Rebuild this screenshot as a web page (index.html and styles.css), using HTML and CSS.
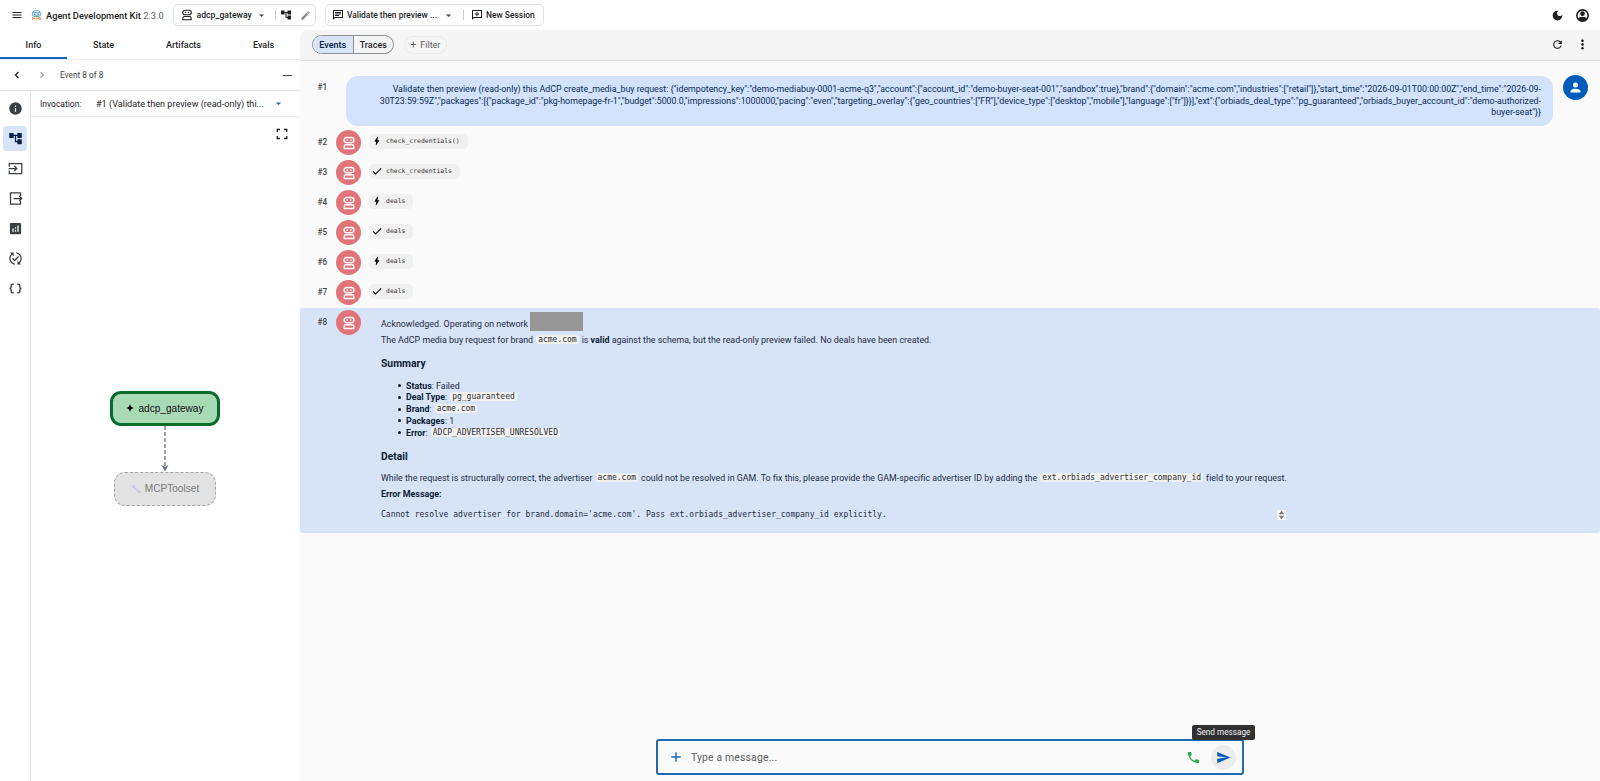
FILE: index.html
```html
<!DOCTYPE html>
<html lang="en">
<head>
  <meta charset="UTF-8">
  <title>Agent Development Kit</title>
  <meta name="viewport" content="width=device-width, initial-scale=1.0">
  <link rel="stylesheet" href="styles.css">
</head>
<body>

  <!-- Shared icons -->
  <svg class="sprite" width="0" height="0">
    <symbol id="i-bot" viewBox="0 0 24 24"><path fill="none" stroke="currentColor" stroke-width="2.300" d="M8 2.500h8a4.500 4.500 0 0 1 0 9H8a4.500 4.500 0 0 1 0-9zM3.800 21.500v-3.500a3 3 0 0 1 3-3h10.400a3 3 0 0 1 3 3v3.500z"/><circle cx="9" cy="7" r="1.500" fill="currentColor"/><circle cx="15" cy="7" r="1.500" fill="currentColor"/></symbol>
    <symbol id="i-tree" viewBox="0 0 24 24"><path fill="currentColor" d="M22 11V3h-7v3H9V3H2v8h7V8h2v10h4v3h7v-8h-7v3h-2V8h2v3z"/></symbol>
    <symbol id="i-bolt" viewBox="0 0 24 24"><path fill="currentColor" d="M10 22H9l1-8H6.500c-.9 0-.5-.8-.3-1.200C8 9.500 10.400 6 13 2h1.500l-1 8H17c.7 0 .8.4.5 1C15 15.500 12.500 18.500 10 22z"/></symbol>
    <symbol id="i-check" viewBox="0 0 24 24"><path fill="none" stroke="currentColor" stroke-width="2.600" d="m2.500 13 6 6L22 5.500"/></symbol>
    <symbol id="i-drop" viewBox="0 0 24 24"><path fill="currentColor" d="m5 9 7 7 7-7z"/></symbol>
  </svg>

  <header class="topbar">
    <svg class="icon menu" viewBox="0 0 24 24"><path fill="currentColor" d="M3 18.200h18v-2.200H3zm0-5.100h18v-2.200H3zm0-7.300V8h18V5.800z"/></svg>
    <svg class="logo" viewBox="0 0 20 20">
      <path d="M3.500 7V4.500l3-2.500h7l3 2.500V7" fill="none" stroke="#6fb1e8" stroke-width="1.800"/>
      <rect x="2.500" y="5" width="15" height="7" rx="2.500" fill="#dcedfb" stroke="#4d96d8" stroke-width="1.600"/>
      <circle cx="7" cy="8.500" r="1.300" fill="#2d5f9a"/><circle cx="13" cy="8.500" r="1.300" fill="#2d5f9a"/>
      <path d="M6 12.500h8" stroke="#51a96a" stroke-width="1.800"/>
      <path d="M3.500 14v5M5 14.500l2 2.500" stroke="#ef6a5b" stroke-width="2"/><path d="M10 14v4.500" stroke="#f5b73c" stroke-width="2.500"/><path d="M16.500 14v5M15 14.500l-2 2.500" stroke="#ef6a5b" stroke-width="2"/>
    </svg>
    <div class="brand">Agent Development Kit <span>2.3.0</span></div>

    <div class="pill app-pill">
      <svg class="icon"><use href="#i-bot"/></svg>
      <span class="app-name">adcp_gateway</span>
      <svg class="icon drop"><use href="#i-drop"/></svg>
      <i class="sep"></i>
      <svg class="icon tree"><use href="#i-tree"/></svg>
      <svg class="icon pencil" viewBox="0 0 24 24"><path fill="currentColor" d="M3 17.250V21h3.750L17.800 9.950 14.050 6.200zM20.700 7.050a1 1 0 0 0 0-1.400l-2.350-2.350a1 1 0 0 0-1.400 0l-1.850 1.850 3.750 3.750z"/></svg>
    </div>

    <div class="pill session-pill">
      <svg class="icon" viewBox="0 0 24 24"><path fill="currentColor" d="M2 2h20v16H6l-4 4zm2 2v13l1.200-1H20V4zm2 2h12v2H6zm0 3h12v2H6zm0 3h8v2H6z"/></svg>
      <span class="session-name">Validate then preview ...</span>
      <svg class="icon drop"><use href="#i-drop"/></svg>
      <i class="sep"></i>
      <svg class="icon add" viewBox="0 0 24 24"><path fill="currentColor" d="M2 2h20v16H6l-4 4zm2 2v13l1.200-1H20V4zm7 1.500h2V9h3.500v2H13v3.500h-2V11H7.500V9H11z"/></svg>
      <span class="new-session">New Session</span>
    </div>

    <div class="top-actions">
      <svg class="icon moon" viewBox="0 0 24 24"><path fill="currentColor" d="M12 3a9 9 0 1 0 9 9c0-.5 0-.9-.1-1.400A5.400 5.400 0 1 1 13.400 3.100 9 9 0 0 0 12 3z"/></svg>
      <svg class="icon account" viewBox="0 0 24 24"><circle cx="12" cy="12" r="9" fill="none" stroke="currentColor" stroke-width="2.600"/><circle cx="12" cy="9" r="3.800" fill="currentColor"/><path fill="currentColor" d="M4.500 18c1-3 4-4.200 7.500-4.200s6.500 1.200 7.500 4.200l-3.500 3H8z"/></svg>
    </div>
  </header>

  <div class="layout">
    <aside class="sidebar">
      <nav class="tabs">
        <div class="tab active">Info</div>
        <div class="tab">State</div>
        <div class="tab">Artifacts</div>
        <div class="tab">Evals</div>
      </nav>

      <div class="event-nav">
        <svg class="icon prev" viewBox="0 0 24 24"><path fill="none" stroke="currentColor" stroke-width="2.600" d="m15 6-6 6 6 6"/></svg>
        <svg class="icon next" viewBox="0 0 24 24"><path fill="none" stroke="currentColor" stroke-width="2" d="m9 6 6 6-6 6"/></svg>
        <span>Event 8 of 8</span>
        <i class="collapse"></i>
      </div>

      <div class="side-body">
        <div class="rail">
          <div class="rail-item"><svg viewBox="0 0 24 24"><path fill="currentColor" d="M12 2a10 10 0 1 0 0 20 10 10 0 0 0 0-20zm1 15h-2v-6h2zm0-8h-2V7h2z"/></svg></div>
          <div class="rail-item selected"><svg><use href="#i-tree"/></svg></div>
          <div class="rail-item"><svg viewBox="0 0 24 24"><path fill="none" stroke="currentColor" stroke-width="2" d="M2 9V4h20v16H2v-5M1 12h13m-4-4 4 4-4 4"/></svg></div>
          <div class="rail-item"><svg viewBox="0 0 24 24"><path fill="none" stroke="currentColor" stroke-width="2" d="M20 8V3H4v18h16v-5M9 12h13m-4-4 4 4-4 4"/></svg></div>
          <div class="rail-item"><svg viewBox="0 0 24 24"><path fill="currentColor" fill-rule="evenodd" d="M5 3h14a2 2 0 0 1 2 2v14a2 2 0 0 1-2 2H5a2 2 0 0 1-2-2V5c0-1.100.9-2 2-2zm2 9v5h2v-5zm4 2v3h2v-3zm0-4v2h2v-2zm4-3v10h2V7z"/></svg></div>
          <div class="rail-item"><svg viewBox="0 0 24 24"><path fill="currentColor" d="m17.660 9.530-7.070 7.070-4.240-4.240 1.410-1.410 2.830 2.830 5.660-5.660zM4 12c0-2.330 1.020-4.420 2.620-5.880L9 8.500v-6H3l2.200 2.200C3.240 6.520 2 9.110 2 12c0 5.190 3.950 9.450 9 9.950v-2.020c-3.940-.49-7-3.860-7-7.930zm18 0c0-5.190-3.950-9.450-9-9.950v2.020c3.940.49 7 3.860 7 7.930 0 2.330-1.020 4.420-2.620 5.880L15 15.500v6h6l-2.200-2.200c1.960-1.820 3.200-4.410 3.200-7.300z"/></svg></div>
          <div class="rail-item"><svg viewBox="0 0 24 24"><path fill="none" stroke="currentColor" stroke-width="2.200" d="M9.500 5H7.500A2.500 2.500 0 0 0 5 7.500V9.500A2.500 2.500 0 0 1 2.500 12 2.500 2.500 0 0 1 5 14.500v2A2.500 2.500 0 0 0 7.500 19h2M14.500 5h2A2.500 2.500 0 0 1 19 7.500v2a2.500 2.500 0 0 0 2.500 2.500 2.500 2.500 0 0 0-2.500 2.500v2a2.500 2.500 0 0 1-2.500 2.500h-2"/></svg></div>
        </div>

        <div class="panel">
          <div class="invocation">
            <label>Invocation:</label>
            <span>#1 (Validate then preview (read-only) thi...</span>
            <svg class="icon drop"><use href="#i-drop"/></svg>
          </div>
          <div class="graph">
            <svg class="expand" viewBox="0 0 24 24"><path fill="none" stroke="currentColor" stroke-width="2.600" d="M2.500 8V3H8M16 3h5.500v5M21.500 16v5H16M8 21H2.500v-5"/></svg>
            <div class="node agent">
              <svg viewBox="0 0 10 10"><path d="M5 0c.6 3 2 4.400 5 5-3 .6-4.400 2-5 5-.6-3-2-4.400-5-5 3-.6 4.400-2 5-5z"/></svg>
              adcp_gateway
            </div>
            <svg class="edge" viewBox="0 0 10 46"><path d="M5 0v42" stroke="#6b7280" stroke-width="1.300" stroke-dasharray="4 2" fill="none"/><path d="M1.500 39 5 45.500 8.500 39 5 41z" fill="#5f6b85"/></svg>
            <div class="node toolset">
              <svg viewBox="0 0 10 10"><path d="M1 1.500 3 3l5 5 1.500.5M1 3l2 .2M3 1v2M7 8.500 8.500 7" fill="none" stroke="#c3c7e4" stroke-width="1.400"/></svg>
              MCPToolset
            </div>
          </div>
        </div>
      </div>
    </aside>

    <main class="main">
      <div class="toolbar">
        <div class="toggle"><span class="on">Events</span><span>Traces</span></div>
        <div class="filter"><b>+</b> Filter</div>
        <div class="toolbar-actions">
          <svg class="icon" viewBox="0 0 24 24"><path fill="currentColor" d="M17.650 6.350A8 8 0 1 0 19.730 14h-2.080A6 6 0 1 1 12 6c1.660 0 3.140.69 4.220 1.780L13 11h7V4z"/></svg>
          <svg class="icon" viewBox="0 0 24 24"><circle cx="12" cy="5" r="2.200"/><circle cx="12" cy="12" r="2.200"/><circle cx="12" cy="19" r="2.200"/></svg>
        </div>
      </div>

      <div class="events">
        <div class="event user">
          <span class="num">#1</span>
          <div class="bubble">Validate then preview (read-only) this AdCP create_media_buy request: {"idempotency_key":"demo-mediabuy-0001-acme-q3","account":{"account_id":"demo-buyer-seat-001","sandbox":true},"brand":{"domain":"acme.com","industries":["retail"]},"start_time":"2026-09-01T00:00:00Z","end_time":"2026-09-<br>30T23:59:59Z","packages":[{"package_id":"pkg-homepage-fr-1","budget":5000.0,"impressions":1000000,"pacing":"even","targeting_overlay":{"geo_countries":["FR"],"device_type":["desktop","mobile"],"language":["fr"]}}],"ext":{"orbiads_deal_type":"pg_guaranteed","orbiads_buyer_account_id":"demo-authorized-<br>buyer-seat"}}</div>
          <div class="avatar me"><svg viewBox="0 0 24 24"><path fill="currentColor" d="M12 12a4 4 0 1 0 0-8 4 4 0 0 0 0 8zm0 2c-2.700 0-8 1.300-8 4v2h16v-2c0-2.700-5.300-4-8-4z"/></svg></div>
        </div>

        <div class="event">
          <span class="num">#2</span><div class="avatar"><svg><use href="#i-bot"/></svg></div>
          <div class="chip"><svg><use href="#i-bolt"/></svg>check_credentials()</div>
        </div>
        <div class="event">
          <span class="num">#3</span><div class="avatar"><svg><use href="#i-bot"/></svg></div>
          <div class="chip"><svg><use href="#i-check"/></svg>check_credentials</div>
        </div>
        <div class="event">
          <span class="num">#4</span><div class="avatar"><svg><use href="#i-bot"/></svg></div>
          <div class="chip"><svg><use href="#i-bolt"/></svg>deals</div>
        </div>
        <div class="event">
          <span class="num">#5</span><div class="avatar"><svg><use href="#i-bot"/></svg></div>
          <div class="chip"><svg><use href="#i-check"/></svg>deals</div>
        </div>
        <div class="event">
          <span class="num">#6</span><div class="avatar"><svg><use href="#i-bot"/></svg></div>
          <div class="chip"><svg><use href="#i-bolt"/></svg>deals</div>
        </div>
        <div class="event">
          <span class="num">#7</span><div class="avatar"><svg><use href="#i-bot"/></svg></div>
          <div class="chip"><svg><use href="#i-check"/></svg>deals</div>
        </div>

        <div class="event current">
          <span class="num">#8</span><div class="avatar"><svg><use href="#i-bot"/></svg></div>
          <div class="answer">
            <p class="ack">Acknowledged. Operating on network <span class="redacted"></span></p>
            <p>The AdCP media buy request for brand <code>acme.com</code> is <strong>valid</strong> against the schema, but the read-only preview failed. No deals have been created.</p>
            <h3>Summary</h3>
            <ul>
              <li><strong>Status</strong>: Failed</li>
              <li><strong>Deal Type</strong>: <code>pg_guaranteed</code></li>
              <li><strong>Brand</strong>: <code>acme.com</code></li>
              <li><strong>Packages</strong>: 1</li>
              <li><strong>Error</strong>: <code>ADCP_ADVERTISER_UNRESOLVED</code></li>
            </ul>
            <h3>Detail</h3>
            <p>While the request is structurally correct, the advertiser <code>acme.com</code> could not be resolved in GAM. To fix this, please provide the GAM-specific advertiser ID by adding the <code>ext.orbiads_advertiser_company_id</code> field to your request.</p>
            <p><strong>Error Message:</strong></p>
            <div class="error-line">
              <pre>Cannot resolve advertiser for brand.domain='acme.com'. Pass ext.orbiads_advertiser_company_id explicitly.</pre>
              <svg class="spinner" viewBox="0 0 10 10"><path fill="#777" d="M5 .3 8 4.300H2zM5 9.700 8 5.700H2z"/></svg>
            </div>
          </div>
        </div>
      </div>

      <div class="composer">
        <svg class="plus" viewBox="0 0 24 24"><path fill="currentColor" d="M20 13.200h-6.800V20h-2.400v-6.800H4v-2.400h6.800V4h2.400v6.800H20z"/></svg>
        <span class="placeholder">Type a message...</span>
        <svg class="phone" viewBox="0 0 24 24"><path fill="currentColor" d="M6.620 10.790a15.150 15.150 0 0 0 6.590 6.590l2.200-2.200a1 1 0 0 1 1.020-.24c1.120.37 2.330.57 3.570.57a1 1 0 0 1 1 1V20a1 1 0 0 1-1 1C10.610 21 3 13.390 3 4a1 1 0 0 1 1-1h3.500a1 1 0 0 1 1 1c0 1.250.2 2.450.57 3.570a1 1 0 0 1-.25 1.020z"/></svg>
        <div class="send"><svg viewBox="0 0 24 24"><path fill="currentColor" d="M2 21 23 12 2 3v7l15 2-15 2z"/></svg></div>
        <div class="tooltip">Send message</div>
      </div>
    </main>
  </div>

</body>
</html>
```
FILE: styles.css
```css
* {
  box-sizing: border-box;
}

body {
  margin: 0;
  width: 1600px;
  height: 781px;
  overflow: hidden;
  display: flex;
  flex-direction: column;
  background: #fff;
  color: #1f1f1f;
  font-family: Roboto, sans-serif;
  font-size: 10px;
}

svg {
  display: block;
  flex: none;
}

.sprite {
  position: absolute;
}

.icon {
  width: 12px;
  height: 12px;
}

/* Top bar */
.topbar {
  height: 30px;
  display: flex;
  align-items: center;
  padding: 0 10px 0 11px;
  font-weight: 500;
  white-space: nowrap;
}

.logo {
  width: 11px;
  height: 12px;
  margin: 0 4px 0 8px;
}

.brand {
  width: 127px;
  font-size: 9.25px;
}

.brand span {
  font-weight: 400;
  color: #5f6368;
}

.pill {
  height: 22px;
  display: flex;
  align-items: center;
  border: 1px solid #e1e2e5;
  border-radius: 5px;
  font-size: 8.45px;
}

.pill .icon {
  width: 12px;
  height: 12px;
}

.pill .drop {
  width: 9px;
  height: 9px;
  color: #444746;
}

.app-pill {
  width: 143px;
  padding-left: 7px;
}

.app-name {
  width: 60px;
  margin-left: 3.500px;
  font-size: 8.7px;
}

.sep {
  width: 1px;
  height: 10px;
  background: #c8cacd;
  margin-left: 9px;
}

.tree {
  margin-left: 4px;
}

.pill .pencil {
  width: 11px;
  height: 11px;
  margin-left: 8px;
  color: #8a8c8e;
}

.session-pill {
  width: 219px;
  margin-left: 8.500px;
  padding-left: 6.500px;
}

.session-name {
  width: 97px;
  margin-left: 3px;
}

.session-pill .sep {
  margin-left: 10px;
}

.add {
  margin-left: 7px;
}

.new-session {
  margin-left: 3px;
}

.top-actions {
  display: flex;
  align-items: center;
  gap: 11px;
  margin-left: auto;
}

.top-actions .moon {
  width: 13px;
  height: 13px;
}

.top-actions .account {
  width: 15px;
  height: 15px;
}

/* Layout */
.layout {
  flex: 1;
  display: flex;
  min-height: 0;
}

.sidebar {
  width: 300px;
  display: flex;
  flex-direction: column;
}

.tabs {
  height: 30px;
  display: grid;
  grid-template-columns: 67px 73px 87px 73px;
  border-bottom: 1px solid #eeeff1;
  font-size: 9px;
  font-weight: 500;
}

.tab {
  display: flex;
  align-items: center;
  justify-content: center;
  padding-top: 3px;
  border-bottom: 2px solid transparent;
}

.tab.active {
  border-bottom-color: #1565c0;
}

.event-nav {
  height: 31px;
  display: flex;
  align-items: center;
  padding: 0 8px 0 11px;
  border-bottom: 1px solid #e1e2e5;
  color: #444746;
  font-size: 8.3px;
}

.prev {
  color: #1f1f1f;
}

.next {
  margin: 0 12px 0 13px;
  color: #777;
}

.collapse {
  width: 9px;
  height: 1px;
  background: #444746;
  margin-left: auto;
}

.side-body {
  flex: 1;
  display: flex;
}

.rail {
  width: 31px;
  padding: 5px 0 0 3px;
  border-right: 1px solid #e1e2e5;
  display: flex;
  flex-direction: column;
  gap: 5px;
  color: #3c4043;
}

.rail-item {
  width: 24px;
  height: 25px;
  border-radius: 4px;
  display: flex;
  align-items: center;
  justify-content: center;
}

.rail-item svg {
  width: 15px;
  height: 15px;
}

.rail-item.selected {
  background: #d7e3f7;
  color: #041e49;
}

.panel {
  flex: 1;
  display: flex;
  flex-direction: column;
}

.invocation {
  height: 26px;
  display: flex;
  align-items: center;
  padding-left: 9px;
  border-bottom: 1px solid #e6e7e9;
  font-size: 8.5px;
  white-space: nowrap;
}

.invocation label {
  width: 56px;
}

.invocation span {
  width: 178px;
  font-size: 9.1px;
}

.invocation .drop {
  width: 9px;
  height: 9px;
  color: #1565c0;
}

/* Agent graph */
.graph {
  flex: 1;
  position: relative;
  display: flex;
  flex-direction: column;
  align-items: center;
  justify-content: center;
  padding: 0 1px 2px 0;
}

.expand {
  position: absolute;
  top: 11px;
  right: 12px;
  width: 12px;
  height: 12px;
}

.node {
  display: flex;
  align-items: center;
  justify-content: center;
  gap: 4px;
  border-radius: 11px;
  font-family: "Liberation Sans", Arial, sans-serif;
  font-size: 10.1px;
}

.node svg {
  width: 8px;
  height: 8px;
}

.agent {
  width: 110px;
  height: 35px;
  border: 3px solid #076b2d;
  background: #a8dab5;
  color: #111;
}

.edge {
  width: 10px;
  height: 46px;
}

.toolset {
  width: 102px;
  height: 34px;
  border: 1px dashed #a5a5a5;
  background: #e3e3e3;
  color: #7b7b7b;
}

.toolset svg {
  width: 10px;
  height: 10px;
}

/* Main column */
.main {
  position: relative;
  width: 1300px;
  display: flex;
  flex-direction: column;
  background: #fafafa;
  border-top-left-radius: 8px;
  overflow: hidden;
}

.toolbar {
  height: 31px;
  display: flex;
  align-items: center;
  padding: 0 11px 1px 12px;
  background: #f5f5f5;
  border-bottom: 1px solid #dfe0e1;
  font-size: 9px;
  font-weight: 500;
}

.toggle {
  width: 82px;
  height: 19px;
  display: flex;
  border: 1px solid #8e9194;
  border-radius: 10px;
  overflow: hidden;
}

.toggle span {
  flex: 1;
  display: flex;
  align-items: center;
  justify-content: center;
}

.toggle .on {
  background: #d7e3f7;
  border-right: 1px solid #8e9194;
  color: #041e49;
}

.filter {
  width: 43px;
  height: 18px;
  margin-left: 10px;
  display: flex;
  align-items: center;
  justify-content: center;
  gap: 4px;
  border: 1px solid #e9e9e9;
  border-radius: 9px;
  color: #5c5e60;
  font-weight: 400;
}

.filter b {
  font-size: 10px;
  font-weight: 400;
}

.toolbar-actions {
  display: flex;
  gap: 12px;
  margin-left: auto;
}

.toolbar-actions .icon {
  width: 13px;
  height: 13px;
}

/* Event list */
.events {
  padding-top: 14px;
}

.event {
  height: 30px;
  display: flex;
  align-items: flex-start;
  padding: 2px 0 0 17.500px;
}

.num {
  width: 18.500px;
  padding-top: 7px;
  font-size: 8.2px;
  font-weight: 500;
  color: #444746;
}

.avatar {
  width: 25px;
  height: 25px;
  flex: none;
  border-radius: 50%;
  display: flex;
  align-items: center;
  justify-content: center;
  background: #e07478;
  color: #fff;
}

.avatar svg {
  width: 14px;
  height: 14px;
}

.avatar.me {
  margin-left: 9.500px;
  background: #005cbb;
}

.avatar.me svg {
  width: 15px;
  height: 15px;
}

.user {
  height: 53px;
  padding-top: 0;
}

.bubble {
  width: 1207px;
  height: 50px;
  flex: none;
  margin: 1px 0 0 10px;
  padding: 8px 12px 0 0;
  border-radius: 12px;
  background: #d3e3fd;
  color: #0b2a55;
  font-size: 8.85px;
  letter-spacing: -0.013px;
  line-height: 11.7px;
  text-align: right;
  white-space: nowrap;
}

.chip {
  height: 15px;
  display: flex;
  align-items: center;
  gap: 4px;
  margin: 4px 0 0 8px;
  padding: 0 8px 1px 3px;
  border-radius: 5px;
  background: #f0f0f0;
  color: #333;
  font-family: "DejaVu Sans Mono", monospace;
  font-size: 6.4px;
  letter-spacing: 0.03px;
}

.chip svg {
  width: 10px;
  height: 10px;
  color: #111;
}

.current {
  height: 225px;
  background: #d7e3f7;
  border-radius: 3px;
}

.answer {
  width: 905px;
  margin-left: 20px;
  padding-top: 9px;
  color: #1c2b45;
  font-size: 8.85px;
  letter-spacing: 0.01px;
  line-height: 11.7px;
  white-space: nowrap;
}

.answer p {
  height: 11.7px;
  margin: 0 0 4.400px;
}

.answer .ack {
  display: flex;
}

.redacted {
  width: 53px;
  height: 19px;
  margin: -7px 0 0 2px;
  background: #969696;
}

.answer strong,
.answer h3 {
  font-weight: 700;
  color: #0c1b36;
}

.answer h3 {
  margin: 10.500px 0;
  font-size: 10.3px;
  line-height: 13px;
}

.answer ul {
  margin: 0;
  padding-left: 17px;
  list-style: none;
}

.answer li {
  height: 11.7px;
}

.answer li::before {
  content: "";
  display: inline-block;
  width: 3px;
  height: 3px;
  margin-right: 5px;
  border-radius: 50%;
  background: #0c1b36;
  vertical-align: 1.500px;
}

.answer code {
  padding: 0 2px;
  margin: 0 0.800px;
  border-radius: 2px;
  background: #f1f1ef;
  color: #2c3036;
  font-family: "DejaVu Sans Mono", monospace;
  font-size: 8px;
  letter-spacing: 0;
  line-height: 9px;
  vertical-align: 1px;
}

.error-line {
  display: flex;
  align-items: center;
  justify-content: space-between;
  margin-top: 8px;
}

.error-line pre {
  margin: 0;
  font-family: "DejaVu Sans Mono", monospace;
  font-size: 8px;
  letter-spacing: 0;
}

.spinner {
  width: 9px;
  height: 10px;
  background: #f6f6f6;
}

/* Message input */
.composer {
  position: relative;
  width: 588px;
  height: 36px;
  margin: auto 0 6px 356px;
  display: flex;
  align-items: center;
  padding: 0 6px 0 12px;
  border: 2px solid #2269b3;
  border-radius: 3px;
}

.plus {
  width: 14px;
  height: 14px;
  margin-left: -1px;
  color: #1565c0;
}

.placeholder {
  flex: 1;
  margin-left: 8px;
  color: #5c5e60;
  font-size: 10.4px;
  letter-spacing: 0.17px;
}

.phone {
  width: 15px;
  height: 15px;
  margin-right: 10px;
  color: #34a853;
}

.send {
  width: 25px;
  height: 25px;
  border-radius: 50%;
  background: #ececec;
  display: flex;
  align-items: center;
  justify-content: center;
  color: #005cbb;
}

.send svg {
  width: 15px;
  height: 15px;
}

.tooltip {
  position: absolute;
  top: -16px;
  right: -13px;
  width: 63px;
  height: 15px;
  border-radius: 2px;
  background: #303030;
  color: #f2f0f4;
  font-size: 8.2px;
  line-height: 15px;
  text-align: center;
}
```
